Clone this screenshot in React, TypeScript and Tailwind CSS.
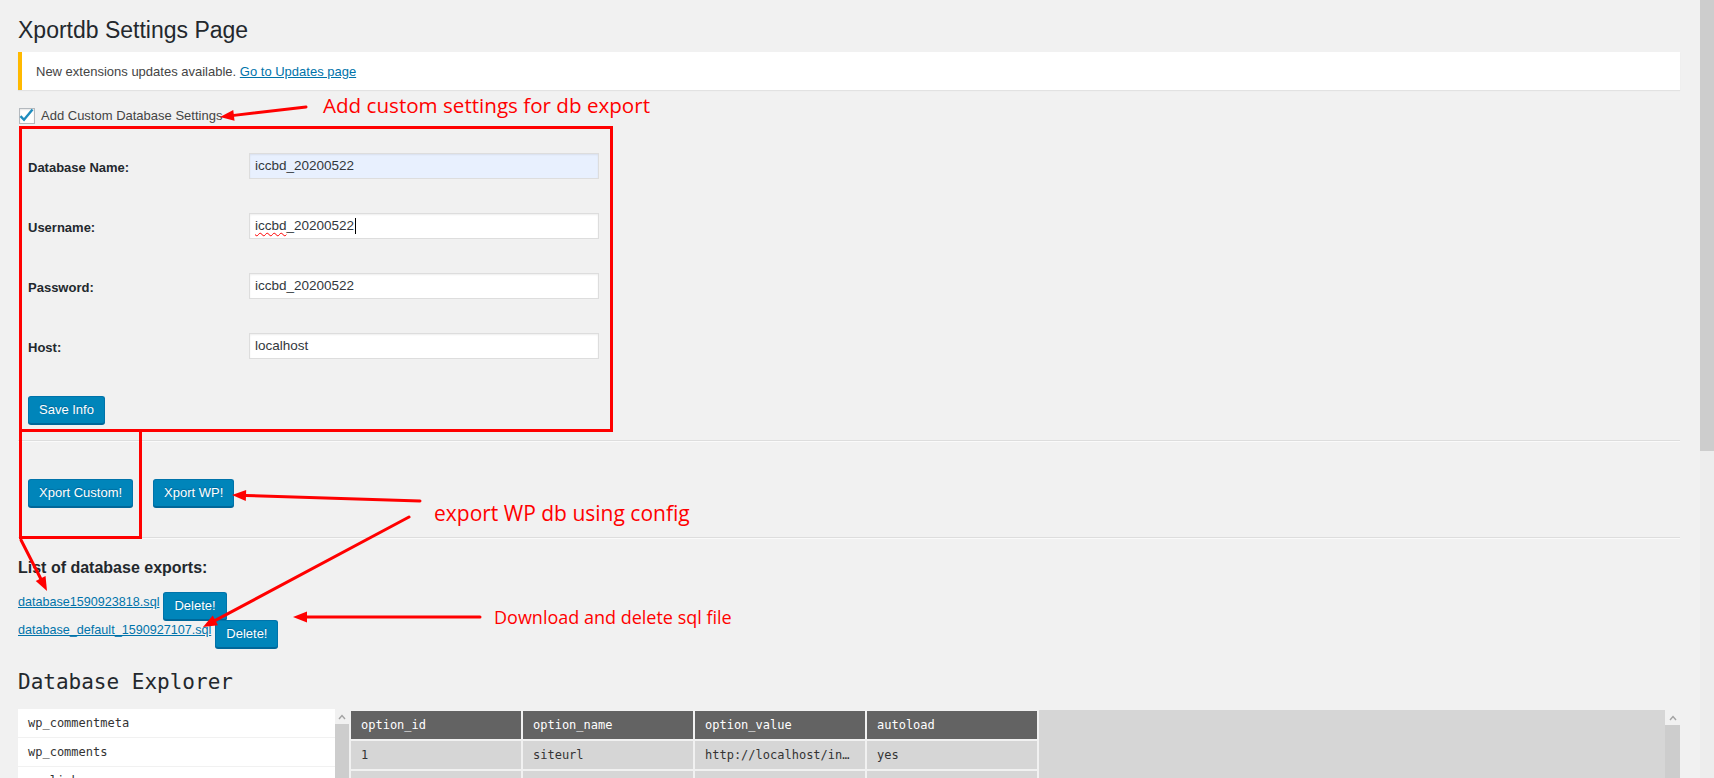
import React from 'react';

const Btn = ({ label, className = '' }: { label: string; className?: string }) => (
  <button
    className={
      'h-[28px] shrink-0 rounded-[3px] border border-[#0073aa] border-b-[#006799] bg-[#0085ba] px-[10px] text-[13px] leading-[26px] text-white shadow-[0_1px_0_#006799] [text-shadow:0_-1px_1px_#006799] ' +
      className
    }
  >
    {label}
  </button>
);

const Field = ({ label, children }: { label: string; children: React.ReactNode }) => (
  <div className="flex h-[26px] items-center">
    <div className="w-[231px] pl-[10px] pt-[3px] text-[13px] font-bold text-[#23282d]">{label}</div>
    {children}
  </div>
);

const inputCls =
  'h-[26px] w-[350px] border border-[#ddd] px-[5px] text-[13.5px] leading-[24px] text-[#32373c] shadow-[inset_0_1px_2px_rgba(0,0,0,0.07)]';

const Chevron = () => (
  <svg width="8" height="6" viewBox="0 0 8 6">
    <polyline points="1,5 4,1.5 7,5" fill="none" stroke="#a3a3a3" strokeWidth="1.4" />
  </svg>
);

const ScrollBar = ({ w }: { w: string }) => (
  <div className={'flex flex-col ' + w}>
    <div className="flex h-[15px] items-center justify-center bg-[#f1f1f1]">
      <Chevron />
    </div>
    <div className="flex-1 bg-[#cdcdcd]" />
  </div>
);

// red arrow, head at (x2, y2)
const Arrow = ({ x1, y1, x2, y2 }: { x1: number; y1: number; x2: number; y2: number }) => {
  const a = Math.atan2(y2 - y1, x2 - x1);
  const len = 14;
  const hw = 5.5;
  const bx = x2 - len * Math.cos(a);
  const by = y2 - len * Math.sin(a);
  const px = -Math.sin(a) * hw;
  const py = Math.cos(a) * hw;
  return (
    <g>
      <line x1={x1} y1={y1} x2={bx} y2={by} stroke="#ff0000" strokeWidth="3" strokeLinecap="round" />
      <polygon points={`${x2},${y2} ${bx + px},${by + py} ${bx - px},${by - py}`} fill="#ff0000" />
    </g>
  );
};

const tables = ['wp_commentmeta', 'wp_comments', 'wp_links', 'wp_options', 'wp_postmeta'];
const headers = ['option_id', 'option_name', 'option_value', 'autoload'];
const rows = [
  ['1', 'siteurl', 'http://localhost/index.php', 'yes'],
  ['2', 'home', 'http://localhost/index.php', 'yes'],
];

export default function App() {
  return (
    <div className="relative flex h-[778px] w-full overflow-hidden bg-[#f1f1f1] font-['Liberation_Sans',Arial,sans-serif] text-[13px] text-[#444]">
      <main className="min-w-0 flex-1 pl-[18px] pr-[20px]">
        <h1 className="pt-[15px] text-[23px] leading-[30px] text-[#23282d]">Xportdb Settings Page</h1>

        <div className="mt-[7px] flex h-[38px] items-center border-l-4 border-[#ffb900] bg-white pl-[14px] shadow-[0_1px_1px_rgba(0,0,0,0.06)]">
          <p className="pt-[2px] leading-[20px]">
            New extensions updates available.{' '}
            <a href="#" className="text-[#0073aa] underline">
              Go to Updates page
            </a>
          </p>
        </div>

        <label className="mt-[18px] flex h-[16px] items-center gap-[6px]">
          <span className="ml-[1px] flex h-[16px] w-[16px] items-center justify-center border border-[#b4b9be] bg-white shadow-[inset_0_1px_2px_rgba(0,0,0,0.1)]">
            <svg width="16" height="16" viewBox="0 0 16 16" className="overflow-visible">
              <path d="M1.5 8.2 L5 11.8 L13.5 1.5" fill="none" stroke="#1e8cbe" strokeWidth="2.4" />
            </svg>
          </span>
          <span className="leading-[16px]">Add Custom Database Settings</span>
        </label>

        <div className="mt-[29px] flex flex-col gap-[34px]">
          <Field label="Database Name:">
            <div className={inputCls + ' bg-[#e8f0fe]'}>iccbd_20200522</div>
          </Field>
          <Field label="Username:">
            <div className={inputCls + ' flex items-center border-[#5b9dd9] bg-white shadow-[0_0_2px_rgba(30,140,190,0.8)]'}>
              <span className="underline decoration-[#ff0000] decoration-wavy decoration-1 underline-offset-2">iccbd</span>
              <span>_20200522</span>
              <span className="ml-[1px] h-[16px] w-[1px] bg-black" />
            </div>
          </Field>
          <Field label="Password:">
            <div className={inputCls + ' bg-white'}>iccbd_20200522</div>
          </Field>
          <Field label="Host:">
            <div className={inputCls + ' bg-white'}>localhost</div>
          </Field>
        </div>

        <div className="mt-[37px] pl-[10px]">
          <Btn label="Save Info" />
        </div>

        <div className="mt-[16px] border-t border-b border-t-[#ddd] border-b-[#fafafa]" />

        <div className="mt-[37px] flex gap-[20px] pl-[10px]">
          <Btn label="Xport Custom!" />
          <Btn label="Xport WP!" />
        </div>

        <div className="mt-[30px] border-t border-b border-t-[#ddd] border-b-[#fafafa]" />

        <h2 className="mt-[18px] text-[16px] font-bold leading-[22px] text-[#23282d]">List of database exports:</h2>

        <div className="mt-[13px] flex flex-col">
          <div className="flex items-start gap-[4px]">
            <a href="#" className="text-[12.6px] leading-[20px] text-[#0073aa] underline">
              database1590923818.sql
            </a>
            <Btn label="Delete!" />
          </div>
          <div className="flex items-start gap-[4px]">
            <a href="#" className="text-[12.6px] leading-[20px] text-[#0073aa] underline">
              database_default_1590927107.sql
            </a>
            <Btn label="Delete!" />
          </div>
        </div>

        <h2 className="mt-[21px] font-['DejaVu_Sans_Mono',monospace] text-[21px] leading-[26px] text-[#23282d]">
          Database Explorer
        </h2>

        <div className="mt-[14px] flex h-[200px] font-['DejaVu_Sans_Mono',monospace] text-[12px]">
          <ul className="w-[317px]">
            {tables.map((t) => (
              <li key={t} className="h-[29px] border-b border-[#f1f1f1] bg-white pl-[10px] leading-[28px] text-[#333]">
                {t}
              </li>
            ))}
          </ul>
          <ScrollBar w="w-[14px]" />
          <div className="grid h-fit w-[690px] grid-cols-[repeat(4,170px)] gap-[2px] bg-[#f1f1f1] p-[2px]">
            {headers.map((h) => (
              <div key={h} className="h-[28px] bg-[#636363] px-[10px] leading-[28px] text-white">
                {h}
              </div>
            ))}
            {rows.map((r) =>
              r.map((c, i) => (
                <div key={r[0] + i} className="h-[28px] truncate bg-[#d6d6d6] px-[10px] leading-[28px] text-[#333]">
                  {c}
                </div>
              ))
            )}
          </div>
          <div className="mt-[1px] flex-1 bg-[#d6d6d6]" />
          <ScrollBar w="mt-[1px] w-[15px]" />
        </div>
      </main>

      <div className="flex w-[14px] flex-col">
        <div className="h-[451px] bg-[#cdcdcd]" />
        <div className="flex-1 bg-[#ededed]" />
      </div>

      {/* annotations drawn over the screenshot */}
      <div className="pointer-events-none absolute inset-0 font-['Open_Sans',sans-serif] text-[#ff0000]">
        <div className="absolute left-[19px] top-[126px] h-[306px] w-[594px] border-[3px] border-[#ff0000]" />
        <div className="absolute left-[19px] top-[429px] h-[110px] w-[123px] border-[3px] border-[#ff0000]" />
        <svg className="absolute left-0 top-0" width="1714" height="778">
          <Arrow x1={306} y1={107} x2={220} y2={117} />
          <Arrow x1={420} y1={501} x2={232} y2={495} />
          <Arrow x1={409} y1={517} x2={203} y2={627} />
          <Arrow x1={21} y1={540} x2={47} y2={591} />
          <Arrow x1={480} y1={617} x2={293} y2={617} />
        </svg>
        <span className="absolute left-[323px] top-[95px] text-[20.6px] leading-none">Add custom settings for db export</span>
        <span className="absolute left-[434px] top-[503px] text-[21px] leading-none">export WP db using config</span>
        <span className="absolute left-[494px] top-[608px] text-[18px] leading-none">Download and delete sql file</span>
      </div>
    </div>
  );
}
